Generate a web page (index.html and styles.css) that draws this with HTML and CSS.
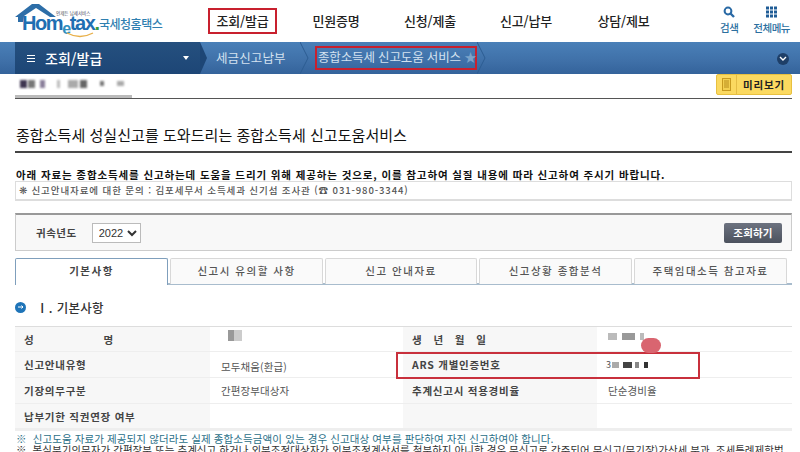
FILE: index.html
```html
<!DOCTYPE html>
<html lang="ko">
<head>
<meta charset="utf-8">
<title>종합소득세 신고도움 서비스</title>
<link rel="stylesheet" href="styles.css">
</head>
<body>
<div class="page">
  <header class="top">
    <a class="logo">
      <svg class="roof" width="42" height="18" viewBox="0 0 42 18"><path d="M0 13 L17 0 L24 0 L41 13 L35 13 L21 4 L9 12 L8 18 L3 18 L3 13 Z" fill="#2d6ea8"/></svg>
      <span class="logo-small">언제든 납세서비스</span>
      <span class="logo-word">Hom<span class="logo-e">e</span>tax<i>.</i></span>
      <span class="logo-kr">국세청홈택스</span>
      <svg class="smile" width="28" height="6" viewBox="0 0 28 6"><path d="M1 1 Q14 8 27 1" fill="none" stroke="#e8b04a" stroke-width="1.4"/></svg>
    </a>
    <nav class="gnb">
      <a class="gnb-item"><span class="gnb-on">조회/발급</span></a>
      <a class="gnb-item">민원증명</a>
      <a class="gnb-item">신청/제출</a>
      <a class="gnb-item">신고/납부</a>
      <a class="gnb-item">상담/제보</a>
    </nav>
    <div class="tools">
      <a class="tool tool-search">
        <svg width="12" height="12" viewBox="0 0 12 12"><circle cx="5" cy="5" r="3.4" fill="none" stroke="#2a6aa5" stroke-width="2"/><path d="M7.5 7.5 L11 11" stroke="#2a6aa5" stroke-width="2.4"/></svg>
        <span>검색</span>
      </a>
      <a class="tool">
        <svg width="11" height="11" viewBox="0 0 11 11" fill="#1f5c96"><rect x="0" y="0" width="3" height="3"/><rect x="4" y="0" width="3" height="3"/><rect x="8" y="0" width="3" height="3"/><rect x="0" y="4" width="3" height="3"/><rect x="4" y="4" width="3" height="3"/><rect x="8" y="4" width="3" height="3"/><rect x="0" y="8" width="3" height="3"/><rect x="4" y="8" width="3" height="3"/><rect x="8" y="8" width="3" height="3"/></svg>
        <span>전체메뉴</span>
      </a>
    </div>
  </header>

  <div class="crumbs">
    <div class="crumb-main">
      <span class="burger"><i></i><i></i><i></i></span>
      <span class="crumb-title">조회/발급</span>
      <span class="crumb-caret"></span>
    </div>
    <div class="crumb-sub">
      <span class="crumb-one">세금신고납부</span>
      <svg class="crumb-chevron" width="9" height="32" viewBox="0 0 9 32"><path d="M0 0 L8 16 L0 32" fill="none" stroke="#2c5d92"/></svg>
      <span class="crumb-two">종합소득세 신고도움 서비스 <b>★</b></span>
      <svg class="crumb-chevron" width="9" height="32" viewBox="0 0 9 32"><path d="M0 0 L8 16 L0 32" fill="none" stroke="#2c5d92"/></svg>
    </div>
    <span class="crumb-more"><svg width="8" height="6" viewBox="0 0 8 6"><path d="M1 1 L4 4 L7 1" fill="none" stroke="#fff" stroke-width="1.4"/></svg></span>
  </div>

  <main class="wrap">
    <div class="subbar">
      <div class="masked">
        <i class="m1"></i><i class="m2"></i><i class="m3"></i><i class="m4"></i><i class="m5"></i><i class="m6"></i><i class="m7"></i><i class="m8"></i>
      </div>
      <a class="preview">
        <span class="preview-ico"><svg width="9" height="13" viewBox="0 0 9 13"><rect x="0.5" y="0.5" width="8" height="12" fill="#f3cf50" stroke="#c79a20"/><path d="M2 3H7M2 5H7M2 7H7M2 9H7" stroke="#b88d1c"/></svg></span>
        <span class="preview-txt">미리보기</span>
      </a>
    </div>

    <h1 class="title">종합소득세 성실신고를 도와드리는 종합소득세 신고도움서비스</h1>

    <p class="notice">아래 자료는 종합소득세를 신고하는데 도움을 드리기 위해 제공하는 것으로, 이를 참고하여 실질 내용에 따라 신고하여 주시기 바랍니다.</p>
    <div class="contact">❋ 신고안내자료에 대한 문의 : 김포세무서 소득세과 신기섬 조사관 (☎ 031-980-3344)</div>

    <form class="search">
      <label class="search-label">귀속년도</label>
      <select class="year"><option>2022</option></select>
      <button type="button" class="search-btn">조회하기</button>
    </form>

    <div class="tabs">
      <a class="tab tab-on">기본사항</a>
      <a class="tab">신고시 유의할 사항</a>
      <a class="tab">신고 안내자료</a>
      <a class="tab">신고상황 종합분석</a>
      <a class="tab">주택임대소득 참고자료</a>
    </div>

    <h2 class="section"><span class="bullet"><svg width="6" height="6" viewBox="0 0 6 6"><path d="M0 3H5M3.5 1.5L5 3L3.5 4.5" fill="none" stroke="#fff"/></svg></span>Ⅰ. 기본사항</h2>

    <div class="grid">
      <div class="th spread"><span>성</span><span>명</span></div>
      <div class="td"><i class="blot b-name"></i></div>
      <div class="th wide"><span>생</span><span>년</span><span>월</span><span>일</span></div>
      <div class="td"><i class="blot b-birth"></i></div>

      <div class="th">신고안내유형</div>
      <div class="td low">모두채움(환급)</div>
      <div class="th">ARS 개별인증번호</div>
      <div class="td ars">3<i class="blot b-ars"></i></div>

      <div class="th">기장의무구분</div>
      <div class="td">간편장부대상자</div>
      <div class="th">추계신고시 적용경비율</div>
      <div class="td">단순경비율</div>

      <div class="th">납부기한 직권연장 여부</div>
      <div class="td"></div>
      <div class="th"></div>
      <div class="td"></div>

      <span class="ars-box"></span>
      <span class="red-blob"></span>
    </div>

    <p class="note note-a">※ &nbsp;신고도움 자료가 제공되지 않더라도 실제 종합소득금액이 있는 경우 신고대상 여부를 판단하여 자진 신고하여야 합니다.</p>
    <p class="note note-b">※ &nbsp;복식부기의무자가 간편장부 또는 추계신고 하거나 외부조정대상자가 외부조정계산서를 첨부하지 아니한 경우 무신고로 간주되어 무신고(무기장)가산세 부과, 조세특례제한법</p>
  </main>
</div>
</body>
</html>
```
FILE: styles.css
```css
* { box-sizing: border-box; }
html, body { margin: 0; padding: 0; }
body { background: #fff; font-family: "Noto Sans CJK KR", "Noto Sans", sans-serif; color: #222; }
.page { width: 800px; height: 452px; overflow: hidden; }
i { font-style: normal; }

.top { display: flex; height: 42px; background: #fff; }
.logo { position: relative; display: block; width: 195px; flex: none; }
.roof { position: absolute; left: 15px; top: 4px; }
.logo-small { position: absolute; left: 56px; top: 11px; font-size: 4.5px; line-height: 4px; color: #445; white-space: nowrap; }
.logo-word { position: absolute; left: 22px; top: 15px; font-family: "Liberation Sans", sans-serif; font-weight: 700; font-size: 20px; line-height: 16px; letter-spacing: -1.4px; color: #1f6fb2; white-space: nowrap; }
.logo-e { color: #2f8fbf; font-size: 16px; position: relative; top: 4px; }
.logo-word i { color: #3a9a3a; }
.logo-kr { position: absolute; left: 99px; top: 16px; font-size: 12px; line-height: 16px; font-weight: 500; letter-spacing: -0.5px; color: #2f7fb0; white-space: nowrap; }
.smile { position: absolute; left: 66px; top: 32px; }

.gnb { display: grid; grid-template-columns: 95px 92px 96px 96px 99px; flex: none; }
.gnb-item { display: flex; align-items: center; justify-content: center; font-size: 13px; font-weight: 500; letter-spacing: -0.2px; color: #222; padding-bottom: 1px; }
.gnb-on { display: block; width: 69px; height: 26px; border: 2px solid #c8202e; text-align: center; line-height: 21px; }

.tools { display: flex; margin-left: 47px; padding-top: 6px; gap: 15px; }
.tool { display: flex; flex-direction: column; align-items: center; gap: 3px; font-size: 10.5px; line-height: 14px; font-weight: 500; letter-spacing: -0.5px; color: #2c6f9f; white-space: nowrap; }
.tool svg { display: block; height: 12px; }

.crumbs { position: relative; display: flex; height: 32px; padding-left: 15px; background: linear-gradient(#4a80b8, #3f70a8 60%, #34639b); color: #fff; }
.crumb-main { display: flex; align-items: center; width: 185px; height: 32px; padding-left: 12px; background: linear-gradient(#25507f, #1d4676); flex: none; }
.burger { display: flex; flex-direction: column; gap: 2px; width: 8px; margin-right: 10px; }
.burger i { display: block; height: 1px; background: #fff; }
.crumb-title { font-size: 14px; font-weight: 500; letter-spacing: 0.1px; }
.crumb-caret { margin-left: auto; margin-right: 11px; border: 3px solid transparent; border-top: 4px solid #fff; border-bottom: 0; }
.crumb-sub { position: relative; display: flex; align-items: center; font-size: 12.5px; letter-spacing: 0.1px; color: #d4e2f0; }
.crumb-sub::before { content: ""; position: absolute; left: 0; top: 0; border-left: 7px solid #1d4676; border-top: 16px solid transparent; border-bottom: 16px solid transparent; }
.crumb-one { width: 100px; padding-left: 16px; height: 32px; line-height: 31px; white-space: nowrap; }
.crumb-two { display: block; width: 162px; height: 24px; margin-left: 6px; border: 2px solid #c8202e; line-height: 18px; letter-spacing: -0.15px; white-space: nowrap; padding-left: 1px; }
.crumb-two b { color: #7da3c9; font-weight: 400; }
.crumb-chevron { flex: none; }
.crumb-more { position: absolute; right: 11px; top: 11px; width: 12px; height: 12px; border-radius: 50%; background: #1e3f68; display: flex; align-items: center; justify-content: center; }

.wrap { width: 777px; margin-left: 15px; }
.subbar { position: relative; display: flex; height: 25px; border-bottom: 1px solid #555; justify-content: flex-end; }
.masked { position: absolute; left: 0; top: 0; width: 117px; height: 24px; border-bottom: 3px solid #bbb; background: #fff; }
.masked i { position: absolute; top: 6px; height: 8px; background: #8a8590; filter: blur(0.8px); }
.m1 { left: 5px; width: 7px; background: #3e3550 !important; }
.m2 { left: 13px; width: 7px; background: #777 !important; }
.m3 { left: 25px; width: 5px; background: #8a7f9a !important; }
.m4 { left: 42px; width: 3px; background: #bbb !important; }
.m5 { left: 53px; width: 10px; background: #aaa !important; }
.m6 { left: 65px; width: 7px; background: #666 !important; }
.m7 { left: 85px; width: 4px; top: 7px !important; height: 5px !important; background: #777 !important; }
.m8 { left: 102px; width: 7px; top: 7px !important; height: 5px !important; background: #aaa !important; }
.preview { display: flex; width: 76px; height: 21px; border: 1px solid #e8c040; border-radius: 2px; background: #fbd960; flex: none; }
.preview-ico { display: flex; align-items: center; justify-content: center; width: 20px; border-right: 1px solid #e5bd45; }
.preview-txt { flex: 1; text-align: center; font-size: 10.5px; line-height: 19px; font-weight: 700; letter-spacing: 0.8px; color: #222; }

.title { margin: 0; height: 54px; padding-top: 16px; border-bottom: 2px solid #444; font-size: 15px; line-height: 40px; font-weight: 400; letter-spacing: 0.05px; color: #111; white-space: nowrap; padding-left: 1px; }
.notice { margin: 15px 0 0; height: 13px; padding-left: 1px; font-size: 10.5px; line-height: 13px; font-weight: 700; letter-spacing: 0.88px; color: #111; white-space: nowrap; }
.contact { height: 20px; padding-left: 3px; border: 1px solid #ddd; border-bottom: 2px solid #ddd; font-size: 9.5px; line-height: 17px; letter-spacing: 0.9px; font-weight: 500; color: #555; white-space: nowrap; }

.search { display: flex; align-items: center; height: 38px; margin-top: 12px; padding: 0 9px 0 20px; background: #f8f8f8; border: 1px solid #ccc; border-top: 2px solid #999; }
.search-label { font-size: 10.5px; font-weight: 700; letter-spacing: 0.5px; color: #444; }
.year { width: 49px; height: 20px; margin-left: 15px; padding: 0 0 0 2px; font-family: "Liberation Sans", sans-serif; font-size: 11px; background: #fff; border: 1px solid #bbb; color: #333; }
.search-btn { margin-left: auto; width: 58px; height: 20px; padding: 0; border: 0; border-radius: 2px; background: linear-gradient(#6d7380, #4c525e); color: #fff; font-family: inherit; font-size: 10.5px; font-weight: 700; letter-spacing: 0.2px; }

.tabs { display: grid; grid-template-columns: 153px 153px 152px 153px 153px; column-gap: 2px; height: 27px; margin-top: 7px; border-bottom: 2px solid #a8bccd; }
.tab { display: block; height: 26px; border: 1px solid #d8d8d8; border-bottom: 0; border-radius: 2px 2px 0 0; background: #fafafa; text-align: center; font-size: 10.5px; line-height: 24px; font-weight: 500; letter-spacing: 1.5px; color: #555; white-space: nowrap; }
.tab-on { height: 27px; border-color: #7f9fbc; background: #fff; font-weight: 700; color: #444; }

.section { display: flex; align-items: center; margin: 14px 0 0; height: 16px; font-size: 12.5px; font-weight: 500; letter-spacing: 0.3px; color: #333; white-space: nowrap; }
.bullet { display: flex; align-items: center; justify-content: center; width: 11px; height: 11px; margin-right: 10px; border-radius: 50%; background: #1e74b8; }

.grid { position: relative; display: grid; grid-template-columns: 195px 193px 194px 195px; grid-template-rows: 25px 26px 26px 25px; margin-top: 11px; border-top: 1px solid #ddd; border-bottom: 2px solid #eee; }
.th, .td { border-bottom: 1px solid #eee; }
.th { display: flex; align-items: center; padding-left: 9px; background: #f7f7f7; font-size: 10.5px; font-weight: 700; letter-spacing: 0.75px; color: #444; white-space: nowrap; }
.spread { justify-content: space-between; padding-right: 96px; }
.wide { gap: 11px; }
.td { display: flex; align-items: center; padding-left: 11px; font-size: 10.5px; letter-spacing: 0.1px; color: #555; white-space: nowrap; }
.low { padding-top: 4px; }
.ars { padding-left: 9px; font-size: 9px; }
.blot { display: block; background: #999; filter: blur(0.7px); }
.b-name { width: 14px; height: 11px; margin-left: 7px; margin-top: -8px; background: linear-gradient(90deg, #999 40%, #ccc 40%); }
.b-birth { width: 36px; height: 7px; margin-top: -6px; background: linear-gradient(90deg, #bbb 25%, #fff 25%, #fff 40%, #999 40%, #999 75%, #fff 75%, #fff 90%, #bbb 90%); }
.b-ars { width: 36px; height: 6px; margin-left: 1px; background: linear-gradient(90deg, #aaa 20%, #fff 20%, #fff 30%, #444 30%, #444 55%, #fff 55%, #fff 65%, #888 65%, #888 75%, #fff 75%, #fff 88%, #333 88%); }
.ars-box { position: absolute; left: 381px; top: 25px; width: 304px; height: 27px; border: 2px solid #c8303c; }
.red-blob { position: absolute; left: 626px; top: 11px; width: 20px; height: 15px; border-radius: 8px; background: #d96570; }

.note { margin: 0; font-size: 10.5px; line-height: 11px; white-space: nowrap; padding-left: 1px; }
.note-a { margin-top: 2px; color: #2b7088; letter-spacing: 0.1px; }
.note-b { color: #333; letter-spacing: 0.05px; }
```
